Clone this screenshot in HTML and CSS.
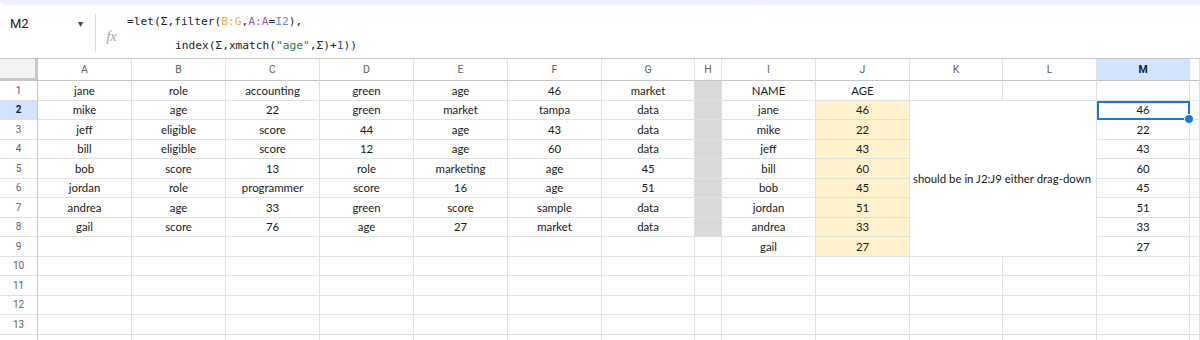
FILE: index.html
```html
<!DOCTYPE html>
<html lang="en">
<head>
    <meta charset="UTF-8">
    <title>Sheet</title>
    <link rel="stylesheet" href="styles.css">
    <script>
        const cols = ['A','B','C','D','E','F','G','H','I','J','K','L','M',''];
        const data = [
            ['jane','role','accounting','green','age','46','market','','NAME','AGE','','',''],
            ['mike','age','22','green','market','tampa','data','','jane','46','','','46'],
            ['jeff','eligible','score','44','age','43','data','','mike','22','','','22'],
            ['bill','eligible','score','12','age','60','data','','jeff','43','','','43'],
            ['bob','score','13','role','marketing','age','45','','bill','60','','','60'],
            ['jordan','role','programmer','score','16','age','51','','bob','45','','','45'],
            ['andrea','age','33','green','score','sample','data','','jordan','51','','','51'],
            ['gail','score','76','age','27','market','data','','andrea','33','','','33'],
            ['','','','','','','','','gail','27','','','27']
        ];

        document.addEventListener("DOMContentLoaded", () => {
            const grid = document.getElementById('grid');

            // header row
            grid.appendChild(makeCell('', 'corner'));
            cols.forEach(c => {
                grid.appendChild(makeCell(c, c === 'M' ? 'col-head selected' : 'col-head'));
            });

            for (let r = 1; r <= 14; r++) {
                grid.appendChild(makeCell(r <= 13 ? r : '', r === 2 ? 'row-head selected' : 'row-head'));
                const row = data[r - 1] || [];
                cols.forEach((c, i) => {
                    // K2:L9 is merged, placed separately
                    if ((c === 'K' || c === 'L') && r >= 2 && r <= 9) return;
                    let cls = 'cell';
                    if (c === 'H' && r <= 8) cls += ' grey';
                    if (c === 'J' && r >= 2 && r <= 9) cls += ' yellow';
                    if (c === 'M' && r === 2) cls += ' active';
                    const cell = makeCell(row[i] || '', cls);
                    if (c === 'M' && r === 2) {
                        const dot = document.createElement('span');
                        dot.className = 'handle';
                        cell.appendChild(dot);
                    }
                    grid.appendChild(cell);
                });
            }
        });

        function makeCell(text, cls) {
            const d = document.createElement('div');
            d.className = cls;
            d.textContent = text;
            return d;
        }
    </script>
</head>
<body>
    <div class="topbar"></div>
    <div class="formula-bar">
        <div class="name-box">
            <span>M2</span>
            <span class="arrow">&#9662;</span>
        </div>
        <div class="fx">fx</div>
        <div class="formula">
            <div>=let(Σ,filter(<span class="f-orange">B:G</span>,<span class="f-purple">A:A</span>=<span class="f-blue">I2</span>),</div>
            <div class="indent">index(Σ,xmatch(<span class="f-green">"age"</span>,Σ)+<span class="f-num">1</span>))</div>
        </div>
    </div>
    <div class="grid" id="grid">
        <div class="cell merged">should be in J2:J9 either drag-down</div>
    </div>
</body>
</html>
```

FILE: styles.css
```css
body {
    margin: 0;
    background: white;
    font-family: Lato, "Open Sans", sans-serif;
    color: #202124;
    overflow: hidden;
    width: 1200px;
    height: 340px;
}
.topbar {
    height: 6px;
    background: linear-gradient(#e9eef8, #f7f9fc);
    border-bottom-left-radius: 14px;
}
.formula-bar {
    display: flex;
    border-bottom: 1px solid #c7c7c7;
    box-sizing: border-box;
    height: 53px;
}
.name-box {
    width: 96px;
    display: flex;
    justify-content: space-between;
    padding: 2px 12px 0 10px;
    box-sizing: border-box;
    font-family: Roboto, sans-serif;
    font-size: 13px;
    border-right: 1px solid #dadce0;
    margin: 8px 0 6px 0;
}
.name-box .arrow {
    font-size: 10px;
    color: #444746;
    padding-top: 2px;
}
.fx {
    width: 31px;
    text-align: center;
    font-family: "Liberation Serif", serif;
    font-style: italic;
    color: #a0a4a8;
    font-size: 14px;
    padding-top: 23px;
}
.formula {
    font-family: "DejaVu Sans Mono", monospace;
    font-size: 11.2px;
    line-height: 24px;
    padding-top: 4px;
    color: #202124;
}
.formula .indent {
    padding-left: 48px;
}
.f-orange { color: #f4a34a; }
.f-purple { color: #9b59b6; }
.f-blue { color: #4a8de8; }
.f-green { color: #188038; }
.f-num { color: #1a56c4; }

.grid {
    display: grid;
    grid-template-columns: 38px repeat(6, 94px) 93px 27px 94px 94px 93px 94px 93px 10px;
    grid-template-rows: 22px repeat(14, 19.5px);
}
.grid > div {
    box-sizing: border-box;
    border-right: 1px solid #e1e1e1;
    border-bottom: 1px solid #e1e1e1;
    display: flex;
    align-items: center;
    justify-content: center;
    font-size: 11.4px;
    white-space: nowrap;
    overflow: hidden;
}
.cell {
    color: #1a1a1a;
}
.corner {
    background: #f1f3f4;
    border-right: 3px solid #c7c7c7 !important;
    border-bottom: 3px solid #c7c7c7 !important;
}
.col-head {
    font-family: Roboto, sans-serif;
    color: #5f6368;
    font-size: 10.5px !important;
    border-bottom: 1px solid #c7c7c7 !important;
}
.row-head {
    font-family: Roboto, sans-serif;
    color: #5f6368;
    font-size: 10px !important;
    border-right: 1px solid #c7c7c7 !important;
}
.selected {
    background: #d3e3fd;
    color: #0b1f4a;
    font-weight: bold;
}
.grey {
    background: #d9d9d9;
}
.yellow {
    background: #fff2cc;
}
.grid > .merged {
    grid-column: 12 / span 2;
    grid-row: 3 / span 8;
    justify-content: flex-start;
    padding-left: 3px;
}
.active {
    position: relative;
    outline: 2px solid #1a73e8;
    outline-offset: -2px;
    overflow: visible !important;
}
.handle {
    position: absolute;
    right: -5px;
    bottom: -5px;
    width: 8px;
    height: 8px;
    border-radius: 50%;
    background: #1a73e8;
    border: 1px solid white;
    z-index: 2;
}
```
